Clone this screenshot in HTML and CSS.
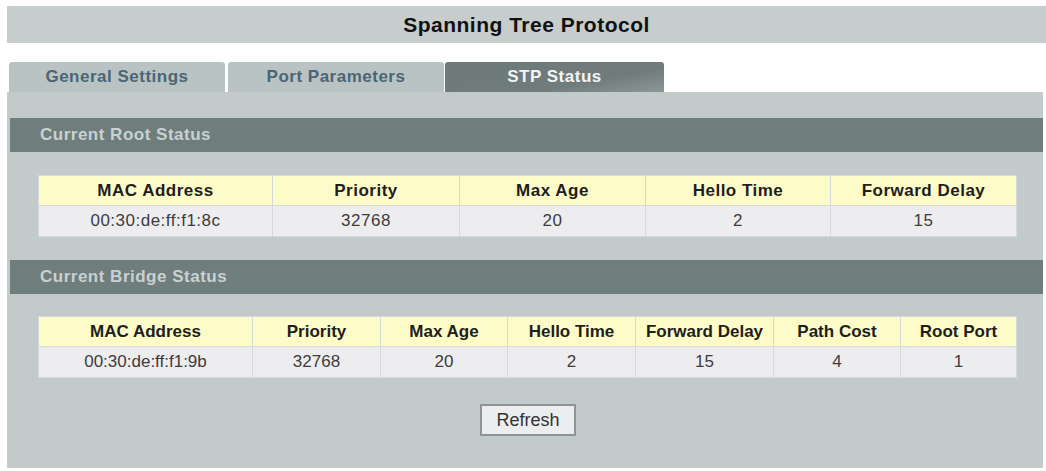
FILE: index.html
```html
<!DOCTYPE html>
<html>
<head>
<meta charset="utf-8">
<link rel="stylesheet" href="styles.css">
</head>
<body>
<div class="page">
  <div class="titlebar">Spanning Tree Protocol</div>
  <div class="tabs">
    <div class="tab">General Settings</div>
    <div class="tab">Port Parameters</div>
    <div class="tab active">STP Status</div>
  </div>
  <div class="panel">
    <div class="section">Current Root Status</div>
    <table class="grid root">
      <tr>
        <th class="r1">MAC Address</th>
        <th class="r2">Priority</th>
        <th class="r3">Max Age</th>
        <th class="r4">Hello Time</th>
        <th class="r5">Forward Delay</th>
      </tr>
      <tr>
        <td>00:30:de:ff:f1:8c</td>
        <td>32768</td>
        <td>20</td>
        <td>2</td>
        <td>15</td>
      </tr>
    </table>
    <div class="section">Current Bridge Status</div>
    <table class="grid bridge">
      <tr>
        <th class="b1">MAC Address</th>
        <th class="b2">Priority</th>
        <th class="b3">Max Age</th>
        <th class="b4">Hello Time</th>
        <th class="b5">Forward Delay</th>
        <th class="b6">Path Cost</th>
        <th class="b7">Root Port</th>
      </tr>
      <tr>
        <td>00:30:de:ff:f1:9b</td>
        <td>32768</td>
        <td>20</td>
        <td>2</td>
        <td>15</td>
        <td>4</td>
        <td>1</td>
      </tr>
    </table>
    <div class="actions">
      <button class="btn">Refresh</button>
    </div>
  </div>
</div>
</body>
</html>
```

FILE: styles.css
```css
html, body {
  margin: 0;
  padding: 0;
  background: #ffffff;
}

body {
  font-family: "Liberation Sans", Arial, sans-serif;
  color: #222;
}

.page {
  padding: 6px 0 0 7px;
}

.titlebar {
  height: 37px;
  background: #c6cdcc;
  display: flex;
  align-items: center;
  justify-content: center;
  font-size: 21px;
  font-weight: bold;
  letter-spacing: 0.5px;
  color: #111;
}

.tabs {
  display: flex;
  margin-top: 19px;
  padding-left: 2px;
  gap: 3px;
}

.tab {
  width: 216px;
  height: 30px;
  display: flex;
  align-items: center;
  justify-content: center;
  background: #b9c3c3;
  color: #4b6575;
  font-size: 17px;
  font-weight: bold;
  letter-spacing: 0.5px;
  border-radius: 3px 3px 0 0;
}

.tab.active {
  width: 219px;
  margin-left: -2px;
  background: linear-gradient(170deg, #6d7a79 0%, #6f7c7b 65%, #8c9796 100%);
  color: #f2f4f4;
}

.panel {
  width: 1036px;
  height: 376px;
  background: #c3cbca;
  padding-top: 26px;
  box-sizing: border-box;
}

.section {
  margin-left: 3px;
  height: 34px;
  background: #6f7d7c;
  color: #c9d1d0;
  font-size: 17px;
  font-weight: bold;
  letter-spacing: 0.5px;
  display: flex;
  align-items: center;
  padding-left: 30px;
}

.grid {
  margin: 23px 0 23px 31px;
  width: 979px;
  border-collapse: collapse;
  font-size: 17px;
  letter-spacing: 0.5px;
  table-layout: fixed;
}

.grid th,
.grid td {
  text-align: center;
  border: 1px solid #d6d9d9;
  padding: 0;
}

.grid th {
  height: 29px;
  background: #fdfcc8;
  color: #1e1e1e;
  font-weight: bold;
}

.grid td {
  height: 30px;
  background: #ededef;
  color: #3c3c3c;
}

.r1 { width: 233px; }
.r2 { width: 186px; }
.r3 { width: 185px; }
.r4 { width: 184px; }
.r5 { width: 185px; }

.b1 { width: 213px; }
.b2 { width: 127px; }
.b3 { width: 126px; }
.b4 { width: 127px; }
.b5 { width: 137px; }
.b6 { width: 126px; }
.b7 { width: 115px; }

.grid.bridge {
  margin-top: 22px;
  margin-bottom: 26px;
}

.grid.bridge th,
.grid.bridge td {
  letter-spacing: 0;
}

.actions {
  display: flex;
  justify-content: center;
  padding-left: 6px;
}

.btn {
  width: 96px;
  height: 32px;
  font-family: "Liberation Sans", Arial, sans-serif;
  font-size: 18px;
  color: #333;
  background: #ecedee;
  border: 2px solid #8e9393;
  border-radius: 0;
  padding: 0;
}
```
